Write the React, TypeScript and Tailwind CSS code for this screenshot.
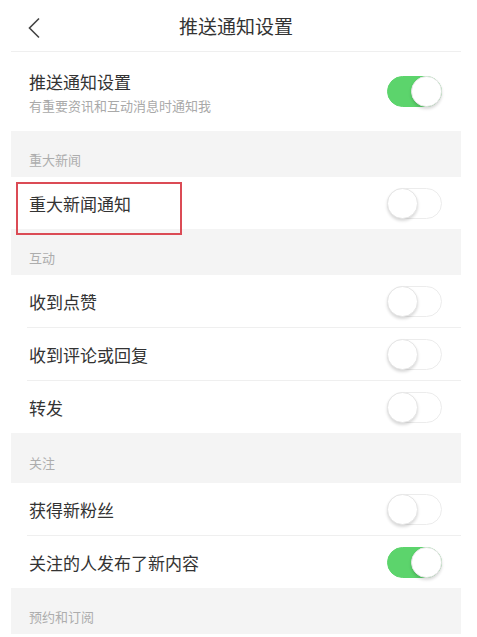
import { useState } from "react";

type Item = { label: string; on: boolean };
type Group = { title: string; tall?: boolean; items: Item[] };

const groups: Group[] = [
  { title: "重大新闻", items: [{ label: "重大新闻通知", on: false }] },
  {
    title: "互动",
    items: [
      { label: "收到点赞", on: false },
      { label: "收到评论或回复", on: false },
      { label: "转发", on: false },
    ],
  },
  {
    title: "关注",
    tall: true,
    items: [
      { label: "获得新粉丝", on: false },
      { label: "关注的人发布了新内容", on: true },
    ],
  },
  { title: "预约和订阅", items: [] },
];

function Toggle({ on, onChange }: { on: boolean; onChange: () => void }) {
  return (
    <button
      onClick={onChange}
      className={`relative h-[31px] w-[55px] rounded-full border transition-colors ${
        on ? "border-[#5cd46c] bg-[#5cd46c]" : "border-[#ececec] bg-white"
      }`}
    >
      <span
        className={`absolute top-[-1px] h-[31px] w-[31px] rounded-full border border-[#e6e6e6] bg-white shadow-[0_2px_3px_rgba(0,0,0,0.15)] transition-all ${
          on ? "left-[23px]" : "left-[-1px]"
        }`}
      />
    </button>
  );
}

export default function App() {
  const [master, setMaster] = useState(true);
  const [state, setState] = useState(groups.map((g) => g.items.map((i) => i.on)));

  const flip = (gi: number, ii: number) =>
    setState((s) => s.map((row, g) => (g === gi ? row.map((v, i) => (i === ii ? !v : v)) : row)));

  return (
    <div
      className="h-[637px] w-[477px] overflow-hidden bg-white text-[#333]"
      style={{ fontFamily: '"Noto Sans CJK SC", "Noto Sans", sans-serif' }}
    >
      <div className="ml-[11px] w-[450px]">
        {/* 顶部导航 */}
        <div className="relative flex h-[52px] items-center justify-center border-b border-[#efefef]">
          <svg className="absolute left-[16px] top-[17px]" width="14" height="22" viewBox="0 0 14 22" fill="none">
            <path d="M12 1.5 2.5 11l9.5 9.5" stroke="#444" strokeWidth="1.6" />
          </svg>
          <span className="text-[19px] leading-none text-[#333]">推送通知设置</span>
        </div>

        {/* 总开关 */}
        <div className="flex h-[79px] items-center justify-between pl-[18px] pr-[19px]">
          <div className="flex flex-col">
            <span className="text-[17px] leading-[24px]">推送通知设置</span>
            <span className="mt-[4px] text-[13px] leading-[16px] text-[#a9a9a9]">有重要资讯和互动消息时通知我</span>
          </div>
          <Toggle on={master} onChange={() => setMaster(!master)} />
        </div>

        {groups.map((g, gi) => (
          <div key={g.title}>
            <div
              className={`flex items-center bg-[#f4f4f4] pl-[18px] text-[13px] leading-none text-[#adadad] ${
                g.tall ? "h-[50px] pt-[9px]" : "h-[46px] pt-[11px]"
              }`}
            >
              {g.title}
            </div>
            {g.items.map((item, ii) => (
              <div key={item.label} className="relative">
                {ii > 0 && <div className="ml-[16px] h-px bg-[#efefef]" />}
                <div className="flex h-[52px] items-center justify-between pl-[18px] pr-[19px]">
                  <span className="text-[17px] leading-none">{item.label}</span>
                  <Toggle on={state[gi][ii]} onChange={() => flip(gi, ii)} />
                </div>
                {gi === 0 && (
                  <div className="pointer-events-none absolute left-[5px] top-[5px] h-[53px] w-[166px] border-2 border-[#db4b55]" />
                )}
              </div>
            ))}
          </div>
        ))}
      </div>
    </div>
  );
}
